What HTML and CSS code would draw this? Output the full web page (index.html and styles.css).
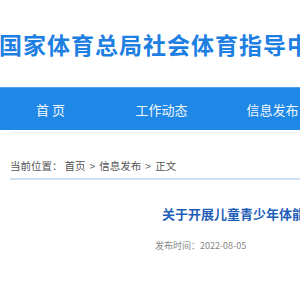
FILE: index.html
```html
<!DOCTYPE html>
<html lang="zh-CN">
<head>
<meta charset="utf-8">
<link rel="stylesheet" href="styles.css">
</head>
<body>
<div class="page">
  <header class="header">
    <h1 class="site-title">国家体育总局社会体育指导中心</h1>
  </header>
  <nav class="nav">
    <a class="nav-item">首 页</a>
    <a class="nav-item">工作动态</a>
    <a class="nav-item">信息发布</a>
  </nav>
  <div class="crumb">
    <span class="crumb-label">当前位置：</span>
    <span>首页</span><span class="sep">&gt;</span><span>信息发布</span><span class="sep">&gt;</span><span>正文</span>
  </div>
  <article class="article">
    <h2 class="article-title">关于开展儿童青少年体能测试与运动技能评价工作的通知</h2>
    <div class="meta">发布时间：2022-08-05</div>
  </article>
</div>
</body>
</html>
```

FILE: styles.css
```css
html, body {
  margin: 0;
  padding: 0;
  background: #ffffff;
}
body {
  font-family: "Noto Sans CJK SC", "Noto Sans", sans-serif;
  overflow: hidden;
}
.page {
  width: 300px;
  overflow: hidden;
}
.header {
  height: 87px;
  display: flex;
  align-items: center;
}
.site-title {
  margin: 0 0 0 -1px;
  font-size: 23px;
  font-weight: 700;
  color: #1e7fe2;
  white-space: nowrap;
  letter-spacing: 1px;
}
.nav {
  height: 43px;
  background: #1f87e6;
  border-top: 1px solid #4a9fec;
  display: flex;
  margin-left: -5px;
  box-sizing: border-box;
}
.nav-item {
  flex: 0 0 111px;
  display: flex;
  align-items: center;
  justify-content: center;
  color: #f2f7fc;
  font-size: 13px;
  white-space: nowrap;
}
.crumb {
  margin: 2px 0 0 10px;
  border-top: 1px solid #eef0f2;
  border-bottom: 2px solid #cddff0;
  padding: 26px 0 5px 0;
  line-height: 14px;
  display: flex;
  align-items: center;
  font-size: 10.5px;
  color: #555;
  white-space: nowrap;
}
.crumb-label {
  margin-right: 2px;
}
.sep {
  margin: 0 4px;
}
.article {
  padding-left: 162px;
}
.article-title {
  margin: 24px 0 0 0;
  font-size: 13px;
  font-weight: 700;
  color: #1f5fb8;
  white-space: nowrap;
  line-height: 20px;
}
.meta {
  margin: 15px 0 0 -7px;
  font-size: 9px;
  color: #888;
  line-height: 14px;
}
```
